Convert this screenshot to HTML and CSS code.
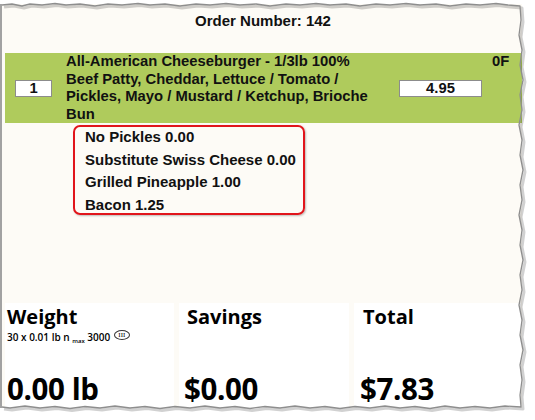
FILE: index.html
```html
<!DOCTYPE html>
<html>
<head>
<meta charset="utf-8">
<link rel="stylesheet" href="styles.css">
</head>
<body>
<div class="paper">
  <div class="title">Order Number: 142</div>
  <div class="item">
    <div class="box qty">1</div>
    <div class="desc">All-American Cheeseburger - 1/3lb 100% Beef Patty, Cheddar, Lettuce / Tomato / Pickles, Mayo / Mustard / Ketchup, Brioche Bun</div>
    <div class="box price">4.95</div>
    <div class="flag">0F</div>
  </div>
  <div class="mods">
    <div class="mod">No Pickles 0.00</div>
    <div class="mod">Substitute Swiss Cheese 0.00</div>
    <div class="mod">Grilled Pineapple 1.00</div>
    <div class="mod">Bacon 1.25</div>
  </div>
  <div class="spacer"></div>
  <div class="panels">
    <div class="panel weight">
      <div class="label">Weight</div>
      <div class="sub">30 x 0.01 lb n <span class="max">max</span> 3000 <span class="cls">III</span></div>
      <div class="value">0.00 lb</div>
    </div>
    <div class="panel savings">
      <div class="label">Savings</div>
      <div class="sub"></div>
      <div class="value">$0.00</div>
    </div>
    <div class="panel total">
      <div class="label">Total</div>
      <div class="sub"></div>
      <div class="value">$7.83</div>
    </div>
  </div>
  <svg class="edge" width="535" height="420" viewBox="0 0 535 420">
    <path class="shadow" d="M2,5 L12,4 L22,6 L30,4 L42,5 L55,3.5 L66,5 L80,4 L95,6 L108,4 L122,5 L138,3.5 L150,5 L165,4 L180,6 L196,4 L210,5 L226,3.5 L240,5 L256,4 L270,6 L286,4 L300,5 L316,3.5 L330,5 L346,4 L360,6 L376,4 L390,5 L406,3.5 L420,5 L436,4 L450,6 L466,4 L480,5 L496,3.5 L508,5 L520,6 L521,20 L519,35 L522,50 L520,65 L523,80 L520,95 L522,110 L519,125 L522,140 L520,155 L523,170 L520,185 L522,200 L519,215 L522,230 L520,245 L523,260 L520,275 L522,290 L519,305 L522,320 L520,335 L523,350 L520,365 L522,380 L520,395 L521,407 L505,406 L490,408 L475,406.5 L460,408 L445,406 L430,408.5 L415,406.5 L400,408 L385,406 L370,408 L355,406.5 L340,408.5 L325,406.5 L310,408 L295,406 L280,408 L265,406.5 L250,408.5 L235,406.5 L220,408 L205,406 L190,408 L175,406.5 L160,408.5 L145,406.5 L130,408 L115,406 L100,408 L85,406.5 L70,408.5 L55,406.5 L40,408 L25,406 L10,408 L2,407"/>
    <path class="line" d="M2,5 L12,4 L22,6 L30,4 L42,5 L55,3.5 L66,5 L80,4 L95,6 L108,4 L122,5 L138,3.5 L150,5 L165,4 L180,6 L196,4 L210,5 L226,3.5 L240,5 L256,4 L270,6 L286,4 L300,5 L316,3.5 L330,5 L346,4 L360,6 L376,4 L390,5 L406,3.5 L420,5 L436,4 L450,6 L466,4 L480,5 L496,3.5 L508,5 L520,6 L521,20 L519,35 L522,50 L520,65 L523,80 L520,95 L522,110 L519,125 L522,140 L520,155 L523,170 L520,185 L522,200 L519,215 L522,230 L520,245 L523,260 L520,275 L522,290 L519,305 L522,320 L520,335 L523,350 L520,365 L522,380 L520,395 L521,407 L505,406 L490,408 L475,406.5 L460,408 L445,406 L430,408.5 L415,406.5 L400,408 L385,406 L370,408 L355,406.5 L340,408.5 L325,406.5 L310,408 L295,406 L280,408 L265,406.5 L250,408.5 L235,406.5 L220,408 L205,406 L190,408 L175,406.5 L160,408.5 L145,406.5 L130,408 L115,406 L100,408 L85,406.5 L70,408.5 L55,406.5 L40,408 L25,406 L10,408 L2,407"/>
  </svg>
</div>
</body>
</html>
```

FILE: styles.css
```css
html, body {
  margin: 0;
  padding: 0;
  background: #ffffff;
}

body {
  width: 535px;
  height: 420px;
  overflow: hidden;
  font-family: "Liberation Sans", Arial, sans-serif;
  color: #111;
}

.paper {
  position: relative;
  margin-top: 4px;
  width: 522px;
  height: 404px;
  box-sizing: border-box;
  border-left: 2px solid #a2a2a2;
  background: #fdfbf6;
  display: flex;
  flex-direction: column;
}

.title {
  height: 49px;
  box-sizing: border-box;
  padding-top: 8px;
  text-align: center;
  font-weight: bold;
  font-size: 15px;
  line-height: 17px;
  padding-left: 2px;
}

.item {
  margin-left: 3px;
  height: 70px;
  background: #afcb5c;
  display: flex;
  align-items: center;
  font-weight: bold;
  font-size: 14.8px;
}

.box {
  height: 17px;
  box-sizing: border-box;
  background: #fff;
  border: 1px solid #8c8c8c;
  text-align: center;
  line-height: 15px;
  font-size: 14.8px;
}

.qty {
  width: 37px;
  margin-left: 10px;
}

.desc {
  width: 316px;
  margin-left: 14px;
  line-height: 17.5px;
  align-self: flex-start;
}

.price {
  width: 83px;
  margin-left: 17px;
}

.flag {
  align-self: flex-start;
  margin-left: 10px;
  line-height: 17.5px;
}

.mods {
  margin-top: 2px;
  margin-left: 71px;
  width: 232px;
  box-sizing: border-box;
  border: 2px solid #e1151b;
  border-radius: 7px;
  box-shadow: 1px 1px 2px rgba(0, 0, 0, 0.25);
  padding: 1px 0 0 10px;
  height: 90px;
  display: flex;
  flex-direction: column;
  gap: 5.7px;
}

.mod {
  font-weight: bold;
  font-size: 15px;
  line-height: 17px;
  white-space: nowrap;
}

.spacer {
  flex: 1;
}

.panels {
  margin-left: 3px;
  height: 105px;
  display: flex;
  gap: 5px;
  font-family: "Open Sans", "DejaVu Sans", sans-serif;
  color: #000;
}

.panel {
  background: #ffffff;
  box-sizing: border-box;
  padding-top: 1.5px;
}

.weight { width: 169px; padding-left: 2px; }
.savings { width: 170px; padding-left: 5px; }
.total { width: 167px; padding-left: 6px; }

.savings .label, .total .label { margin-left: 3px; }

.label {
  font-weight: bold;
  font-size: 20px;
  line-height: 24px;
}

.sub {
  margin-top: 1.5px;
  height: 12px;
  font-size: 10px;
  line-height: 12px;
  font-weight: 600;
  white-space: nowrap;
}

.max {
  font-size: 6px;
  vertical-align: -2px;
}

.cls {
  display: inline-block;
  width: 16px;
  height: 10px;
  box-sizing: border-box;
  border: 1px solid #333;
  border-radius: 50%;
  font-family: "Liberation Serif", serif;
  font-size: 7px;
  line-height: 8px;
  text-align: center;
  font-weight: normal;
  vertical-align: 4px;
  margin-left: 1px;
}

.value {
  margin-top: 29px;
  font-weight: bold;
  font-size: 29.5px;
  letter-spacing: -0.4px;
  line-height: 36px;
  white-space: nowrap;
}

.edge {
  position: absolute;
  left: -2px;
  top: -4px;
  pointer-events: none;
}

.edge path {
  fill: none;
  stroke-linejoin: round;
}

.edge .shadow {
  stroke: rgba(0, 0, 0, 0.18);
  stroke-width: 3;
  transform: translate(2px, 2px);
}

.edge .line {
  stroke: #8e8e8e;
  stroke-width: 1.3;
}
```
